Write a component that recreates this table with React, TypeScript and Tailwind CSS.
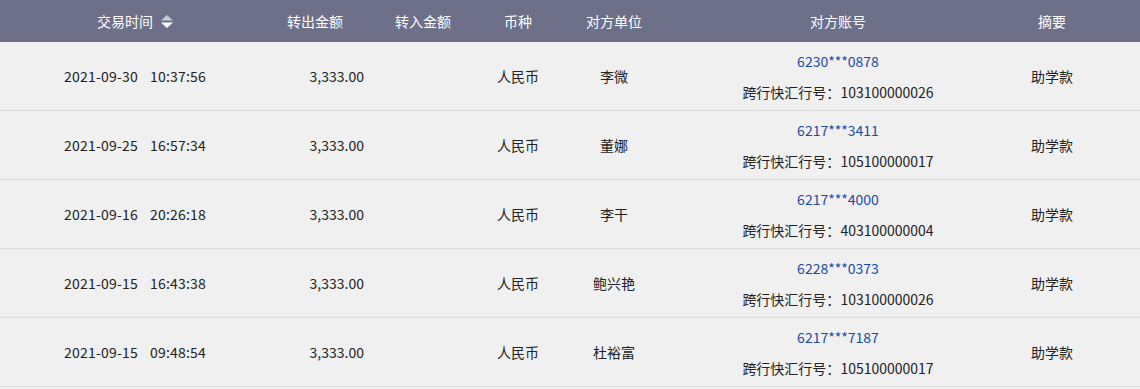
const rows = [
  { date: "2021-09-30", time: "10:37:56", out: "3,333.00", name: "李微", acct: "6230***0878", bank: "103100000026" },
  { date: "2021-09-25", time: "16:57:34", out: "3,333.00", name: "董娜", acct: "6217***3411", bank: "105100000017" },
  { date: "2021-09-16", time: "20:26:18", out: "3,333.00", name: "李干", acct: "6217***4000", bank: "403100000004" },
  { date: "2021-09-15", time: "16:43:38", out: "3,333.00", name: "鲍兴艳", acct: "6228***0373", bank: "103100000026" },
  { date: "2021-09-15", time: "09:48:54", out: "3,333.00", name: "杜裕富", acct: "6217***7187", bank: "105100000017" },
];

const cols = "grid grid-cols-[270px_100px_106px_84px_108px_340px_88px_1fr]";

function SortIcon() {
  return (
    <svg width="12" height="13" viewBox="0 0 12 13" className="ml-2">
      <path d="M6 0 L12 5.5 L0 5.5 Z" fill="#c9c9d3" />
      <path d="M0 7.5 L12 7.5 L6 13 Z" fill="#ffffff" />
    </svg>
  );
}

export default function App() {
  return (
    <div
      className="w-[1140px] h-[389px] bg-[#f0f0f0] text-[14px] text-[#222]"
      style={{ fontFamily: '"Noto Sans CJK SC", "Noto Sans", sans-serif' }}
    >
      {/* header */}
      <div className={`${cols} h-[42px] bg-[#6e6f88] text-white items-center text-center`}>
        <div className="flex items-center justify-center">
          <span>交易时间</span>
          <SortIcon />
        </div>
        <div className="pr-[10px]">转出金额</div>
        <div>转入金额</div>
        <div>币种</div>
        <div>对方单位</div>
        <div>对方账号</div>
        <div>摘要</div>
        <div></div>
      </div>

      {rows.map((r) => (
        <div key={r.acct + r.time} className={`${cols} h-[69px] border-b border-[#dcdcdc] items-center text-center`}>
          <div className="flex justify-center gap-[12px] tracking-[0.2px]">
            <span>{r.date}</span>
            <span>{r.time}</span>
          </div>
          <div className="text-right pr-[6px]">{r.out}</div>
          <div></div>
          <div>人民币</div>
          <div>{r.name}</div>
          <div className="flex flex-col items-center gap-[9px]">
            <span className="text-[#1b4ba3] leading-[22px]">{r.acct}</span>
            <span className="leading-[22px]">跨行快汇行号：{r.bank}</span>
          </div>
          <div>助学款</div>
          <div></div>
        </div>
      ))}
    </div>
  );
}
